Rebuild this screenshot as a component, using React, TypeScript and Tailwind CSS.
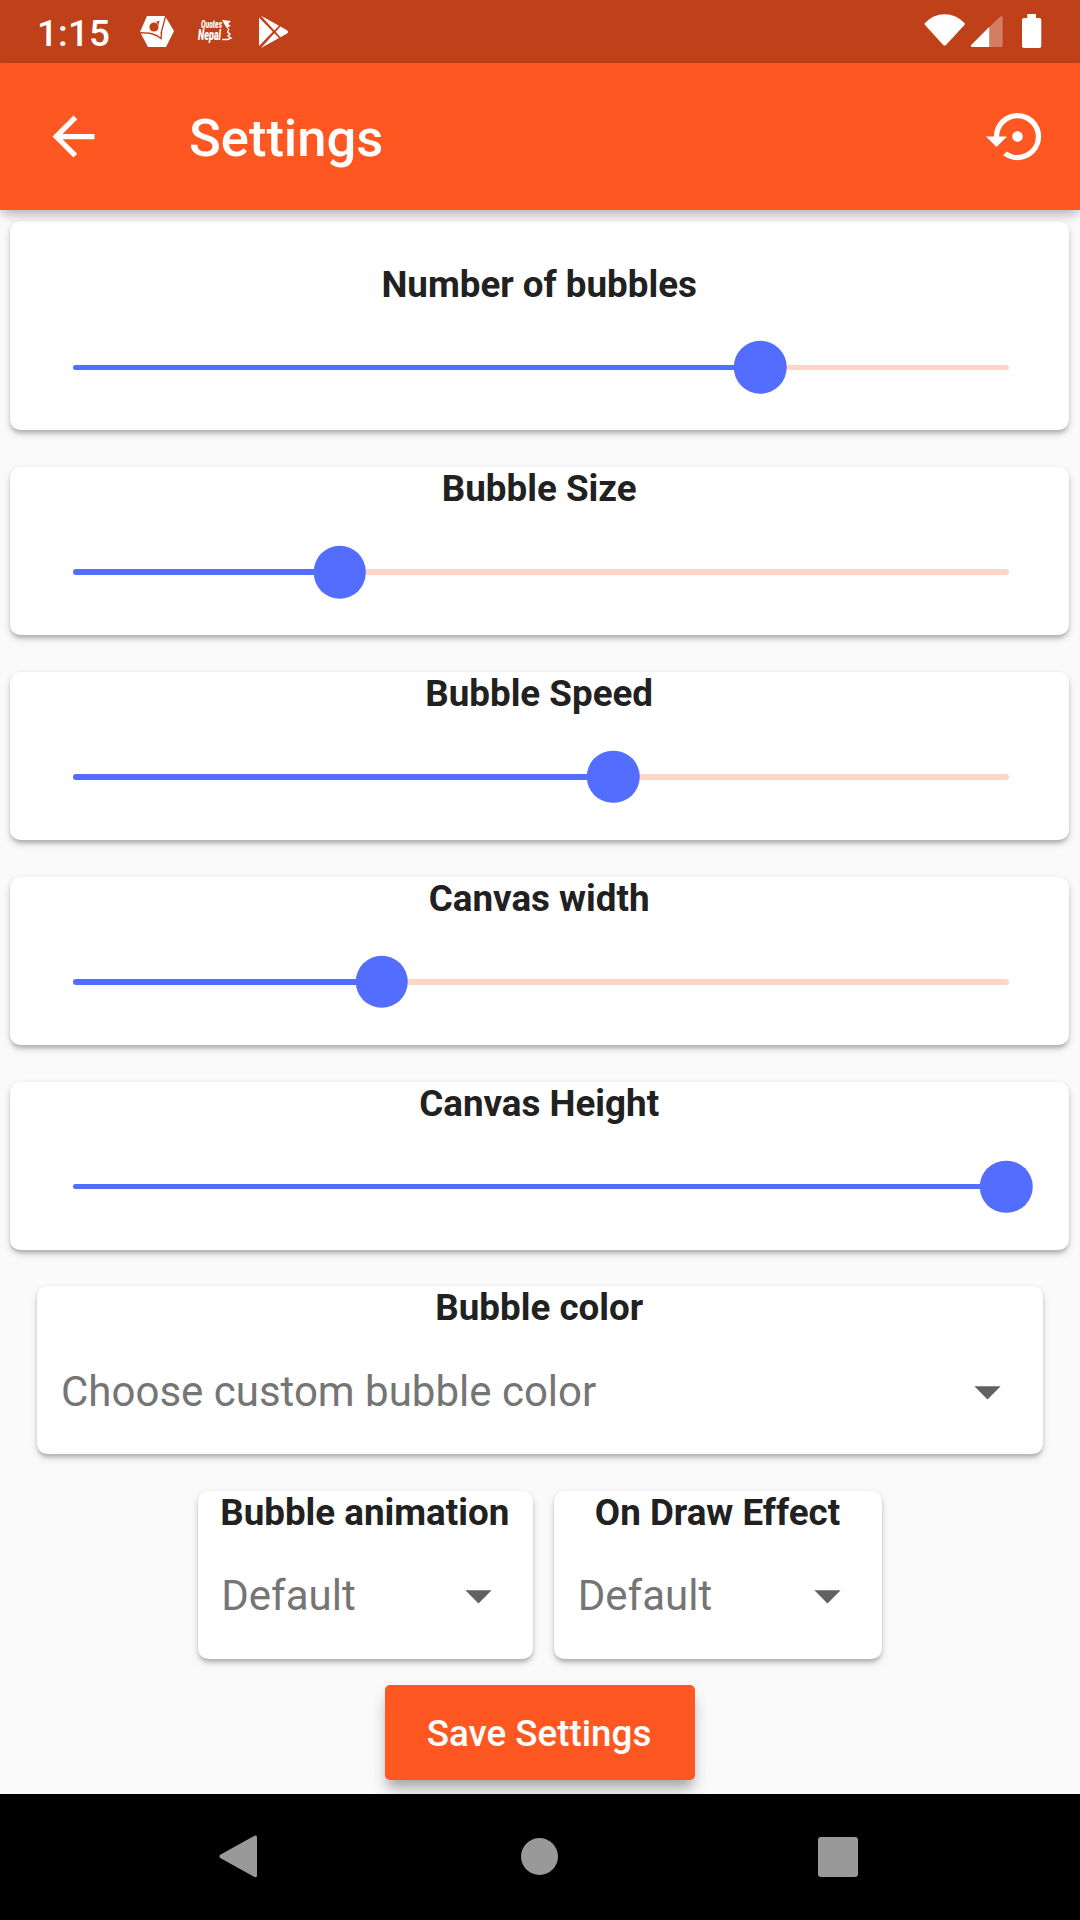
import type { ReactNode } from "react";
import { MdArrowBack, MdArrowDropDown, MdSettingsBackupRestore } from "react-icons/md";

const CARD_SHADOW =
  "shadow-[0_4px_4px_-1px_rgba(0,0,0,0.2),0_4px_8px_0_rgba(0,0,0,0.12),0_1px_5px_0_rgba(0,0,0,0.05)]";

const sliders = [
  { label: "Number of bubbles", thumb: 760.3 },
  { label: "Bubble Size", thumb: 340 },
  { label: "Bubble Speed", thumb: 613.3 },
  { label: "Canvas width", thumb: 382 },
  { label: "Canvas Height", thumb: 1006.5 },
];

const TRACK_START = 73.4;
const TRACK_END = 1009.4;

function StatusBar() {
  return (
    <div className="flex h-[63px] shrink-0 items-center justify-between bg-[#bf4119] pl-[37px] pr-[38px] text-white">
      <div className="flex items-center">
        <span className="w-[103px] pt-[4px] text-[36.75px] font-medium leading-[44px] tracking-[0.2px]">1:15</span>
        <svg width="34" height="32" viewBox="0 0 34 32" fill="none">
          <path d="M7 0H25L34 15L26 31H8L0 16Z" fill="white" />
          <path d="M25.6 0L21 17.5" stroke="#bf4119" strokeWidth="1.3" />
          <path d="M0 16.8C8 17 15 17 21 22.5L21.6 16" stroke="#bf4119" strokeWidth="1.4" />
          <circle cx="14" cy="11" r="4.6" fill="#bf4119" />
          <path d="M16 5.5L19.5 5L18.5 9Z" fill="#bf4119" />
        </svg>
        <svg className="ml-[24px] overflow-visible" width="34" height="26" viewBox="0 0 34 26">
          <g fill="white" fontFamily="Roboto" fontWeight="900" fontStyle="italic">
            <text x="3" y="9" fontSize="10.5" textLength="21" lengthAdjust="spacingAndGlyphs">Quotes</text>
            <text x="0" y="21" fontSize="14" textLength="23" lengthAdjust="spacingAndGlyphs">Nepal</text>
          </g>
          <path d="M24 1L33 2L30 5L33 7L30 8L31 11L28 8Z" fill="white" />
          <path d="M31 10L29.5 13L32 15L30 17L33 19L29.5 20.5M24 20.5H30" stroke="white" strokeWidth="1.4" fill="none" />
        </svg>
        <svg className="ml-[26px]" width="31" height="34" viewBox="0 0 31 34" fill="white">
          <path d="M1 2.5L14.8 16.8L1 31Z" />
          <path d="M3 0.8L21 10.7L16.3 15.4Z" />
          <path d="M3 33L21 23L16.3 18.3Z" />
          <path d="M22.4 11.6L29 15.2Q31 16.8 29 18.5L22.4 22.2L17.7 16.8Z" />
        </svg>
      </div>
      <svg width="118" height="35" viewBox="0 0 118 35" fill="white">
        <path d="M0.7 9.2Q9 0.3 20.6 0.3T40.7 9.2Q41.2 10 40.4 11L22 31Q20.6 32.2 19.2 31L1 11Q0.2 10 0.7 9.2Z" />
        <path d="M47 31.2L76 2.8Q78.5 0.8 78.7 3.5V31.2Q78.7 33 77 33H48.5Q46.2 32.8 47 31.2Z" opacity="0.32" />
        <path d="M65.2 13V33H48.5Q46.2 32.8 47 31.2Z" />
        <path d="M103.3 0H112V4H115.3Q117.3 4 117.3 6V32Q117.3 34 115.3 34H100Q98 34 98 32V6Q98 4 100 4H103.3Z" />
      </svg>
    </div>
  );
}

function AppBar() {
  return (
    <header className="z-10 flex h-[147px] shrink-0 items-center bg-[#ff5722] pl-[42px] pr-[31.5px] text-white shadow-[0_5px_10px_-2px_rgba(0,0,0,0.16),0_8px_12px_-2px_rgba(0,0,0,0.1),0_3px_12px_0_rgba(0,0,0,0.06)]">
      <MdArrowBack className="size-[63px]" />
      <h1 className="ml-[84px] flex-1 pt-[2px] text-[52.5px] font-medium leading-[62px]">Settings</h1>
      <MdSettingsBackupRestore className="size-[63px]" />
    </header>
  );
}

function Card({ title, className, children }: { title: string; className: string; children: ReactNode }) {
  return (
    <section className={`flex flex-col rounded-[10.5px] bg-white ${CARD_SHADOW} ${className}`}>
      <h2 className="h-[42px] pr-[1.5px] text-center text-[36.75px] font-bold leading-[43px] text-[#212121]">{title}</h2>
      {children}
    </section>
  );
}

function Slider({ thumb }: { thumb: number }) {
  return (
    <div className="flex h-[126px] items-center pl-[63px] pr-[60px]">
      <div className="relative h-[5.5px] w-full rounded-full bg-[#ffd5c8]">
        <div
          className="h-full rounded-full bg-[#536dfe]"
          style={{ width: `${((thumb - TRACK_START) / (TRACK_END - TRACK_START)) * 100}%` }}
        />
        <div
          className="absolute top-1/2 size-[52.5px] -translate-x-1/2 -translate-y-1/2 rounded-full bg-[#536dfe]"
          style={{ left: thumb - TRACK_START }}
        />
      </div>
    </div>
  );
}

function Dropdown({ value, className }: { value: string; className: string }) {
  return (
    <div className={`flex h-[126px] items-center justify-between text-[42px] leading-[50px] text-[#757575] ${className}`}>
      <span className="pt-[1px]">{value}</span>
      <MdArrowDropDown className="size-[63px] text-[#616161]" />
    </div>
  );
}

function NavBar() {
  return (
    <nav className="z-10 flex h-[126px] shrink-0 items-center bg-black pb-[1px] pl-[219px] text-[#999999]">
      <svg width="39" height="43" viewBox="0 0 39 43" fill="currentColor">
        <path d="M1.2 19.8L35.5 0.8Q38 0 38 2.5V40.5Q38 43 35.5 42L1.2 23Q-0.4 21.4 1.2 19.8Z" />
      </svg>
      <div className="ml-[263px] size-[37px] rounded-full bg-[#999999]" />
      <div className="ml-[260px] size-[40px] rounded-[3px] bg-[#999999]" />
    </nav>
  );
}

export default function App() {
  return (
    <div className="flex h-[1920px] w-[1080px] flex-col overflow-hidden bg-[#fafafa] font-['Roboto',sans-serif]">
      <StatusBar />
      <AppBar />
      <main className="flex flex-1 flex-col items-center pt-[10.5px]">
        <div className="flex w-full flex-col gap-[36.85px] pl-[10.4px] pr-[10.6px]">
          {sliders.map((s, i) => (
            <Card key={s.label} title={s.label} className={i === 0 ? "h-[209.8px] pt-[42px]" : "h-[168px]"}>
              <Slider thumb={s.thumb} />
            </Card>
          ))}
        </div>
        <Card title="Bubble color" className="mt-[36.5px] h-[168px] w-[1006px]">
          <Dropdown value="Choose custom bubble color" className="pl-[24px] pr-[24px] pt-[1px]" />
        </Card>
        <div className="mt-[36.75px] flex gap-[21px]">
          <Card title="Bubble animation" className="h-[168px] w-[335.5px]">
            <Dropdown value="Default" className="pl-[23.5px] pr-[23.5px]" />
          </Card>
          <Card title="On Draw Effect" className="h-[168px] w-[328px]">
            <Dropdown value="Default" className="pl-[23.5px] pr-[23.5px]" />
          </Card>
        </div>
        <button className="mt-[26px] h-[95px] w-[310px] rounded-[5px] bg-[#ff5722] pr-[2px] pt-[2px] text-[36.75px] font-medium leading-[43px] text-white shadow-[0_9px_10px_-3px_rgba(0,0,0,0.16),0_14px_18px_-2px_rgba(0,0,0,0.16),0_4px_16px_0_rgba(0,0,0,0.06)]">
          Save Settings
        </button>
      </main>
      <NavBar />
    </div>
  );
}
